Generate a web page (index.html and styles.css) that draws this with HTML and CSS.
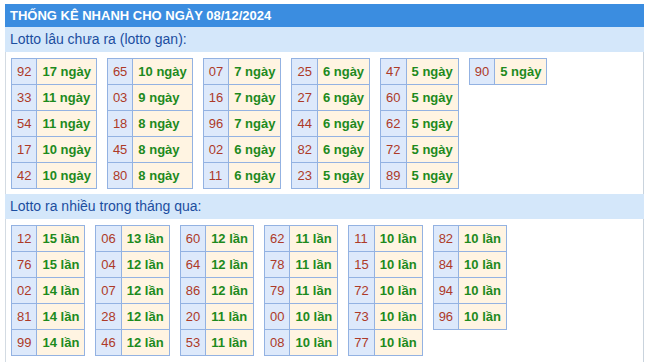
FILE: index.html
```html
<!DOCTYPE html>
<html lang="vi">
<head>
<meta charset="utf-8">
<link rel="stylesheet" href="styles.css">
</head>
<body>
<div class="box">
  <div class="title">THỐNG KÊ NHANH CHO NGÀY 08/12/2024</div>
  <div class="content">
    <div class="sub">Lotto lâu chưa ra (lotto gan):</div>
    <div class="tables">
      <table><tr><td class="n">92</td><td class="v">17 ngày</td></tr><tr><td class="n">33</td><td class="v">11 ngày</td></tr><tr><td class="n">54</td><td class="v">11 ngày</td></tr><tr><td class="n">17</td><td class="v">10 ngày</td></tr><tr><td class="n">42</td><td class="v">10 ngày</td></tr></table>
      <table><tr><td class="n">65</td><td class="v">10 ngày</td></tr><tr><td class="n">03</td><td class="v">9 ngày</td></tr><tr><td class="n">18</td><td class="v">8 ngày</td></tr><tr><td class="n">45</td><td class="v">8 ngày</td></tr><tr><td class="n">80</td><td class="v">8 ngày</td></tr></table>
      <table><tr><td class="n">07</td><td class="v">7 ngày</td></tr><tr><td class="n">16</td><td class="v">7 ngày</td></tr><tr><td class="n">96</td><td class="v">7 ngày</td></tr><tr><td class="n">02</td><td class="v">6 ngày</td></tr><tr><td class="n">11</td><td class="v">6 ngày</td></tr></table>
      <table><tr><td class="n">25</td><td class="v">6 ngày</td></tr><tr><td class="n">27</td><td class="v">6 ngày</td></tr><tr><td class="n">44</td><td class="v">6 ngày</td></tr><tr><td class="n">82</td><td class="v">6 ngày</td></tr><tr><td class="n">23</td><td class="v">5 ngày</td></tr></table>
      <table><tr><td class="n">47</td><td class="v">5 ngày</td></tr><tr><td class="n">60</td><td class="v">5 ngày</td></tr><tr><td class="n">62</td><td class="v">5 ngày</td></tr><tr><td class="n">72</td><td class="v">5 ngày</td></tr><tr><td class="n">89</td><td class="v">5 ngày</td></tr></table>
      <table><tr><td class="n">90</td><td class="v">5 ngày</td></tr></table>
    </div>
    <div class="sub">Lotto ra nhiều trong tháng qua:</div>
    <div class="tables">
      <table><tr><td class="n">12</td><td class="v">15 lần</td></tr><tr><td class="n">76</td><td class="v">15 lần</td></tr><tr><td class="n">02</td><td class="v">14 lần</td></tr><tr><td class="n">81</td><td class="v">14 lần</td></tr><tr><td class="n">99</td><td class="v">14 lần</td></tr></table>
      <table><tr><td class="n">06</td><td class="v">13 lần</td></tr><tr><td class="n">04</td><td class="v">12 lần</td></tr><tr><td class="n">07</td><td class="v">12 lần</td></tr><tr><td class="n">28</td><td class="v">12 lần</td></tr><tr><td class="n">46</td><td class="v">12 lần</td></tr></table>
      <table><tr><td class="n">60</td><td class="v">12 lần</td></tr><tr><td class="n">64</td><td class="v">12 lần</td></tr><tr><td class="n">86</td><td class="v">12 lần</td></tr><tr><td class="n">20</td><td class="v">11 lần</td></tr><tr><td class="n">53</td><td class="v">11 lần</td></tr></table>
      <table><tr><td class="n">62</td><td class="v">11 lần</td></tr><tr><td class="n">78</td><td class="v">11 lần</td></tr><tr><td class="n">79</td><td class="v">11 lần</td></tr><tr><td class="n">00</td><td class="v">10 lần</td></tr><tr><td class="n">08</td><td class="v">10 lần</td></tr></table>
      <table><tr><td class="n">11</td><td class="v">10 lần</td></tr><tr><td class="n">15</td><td class="v">10 lần</td></tr><tr><td class="n">72</td><td class="v">10 lần</td></tr><tr><td class="n">73</td><td class="v">10 lần</td></tr><tr><td class="n">77</td><td class="v">10 lần</td></tr></table>
      <table><tr><td class="n">82</td><td class="v">10 lần</td></tr><tr><td class="n">84</td><td class="v">10 lần</td></tr><tr><td class="n">94</td><td class="v">10 lần</td></tr><tr><td class="n">96</td><td class="v">10 lần</td></tr></table>
    </div>
  </div>
</div>
</body>
</html>
```
FILE: styles.css
```css
html, body {
  margin: 0;
  padding: 0;
  background: #ffffff;
}
body {
  font-family: "Liberation Sans", Arial, sans-serif;
}
.box {
  margin: 4px 0 0 5px;
  width: 639px;
}
.title {
  height: 23px;
  line-height: 23px;
  background: #3b8de0;
  color: #ffffff;
  font-weight: bold;
  font-size: 13px;
  padding-left: 5px;
  white-space: nowrap;
}
.content {
  border-left: 1px solid #d3dbe3;
  border-right: 1px solid #c9d3dd;
  padding-bottom: 6px;
}
.sub {
  height: 25px;
  line-height: 25px;
  background: #d4e7fa;
  color: #1c4ea0;
  font-size: 14px;
  margin-left: -1px;
  margin-right: -1px;
  padding-left: 5px;
}
.tables {
  display: flex;
  align-items: flex-start;
  gap: 10px;
  padding: 6px 0 5px 5px;
}
table {
  border-collapse: collapse;
  font-size: 13px;
}
td {
  border: 1px solid #93b2e2;
  height: 26px;
  padding: 0 5px;
  box-sizing: border-box;
  white-space: nowrap;
}
td.n {
  background: #dde9fb;
  color: #ad3a28;
}
td.v {
  background: #fff4e2;
  color: #1d8a1d;
  font-weight: bold;
}
```
